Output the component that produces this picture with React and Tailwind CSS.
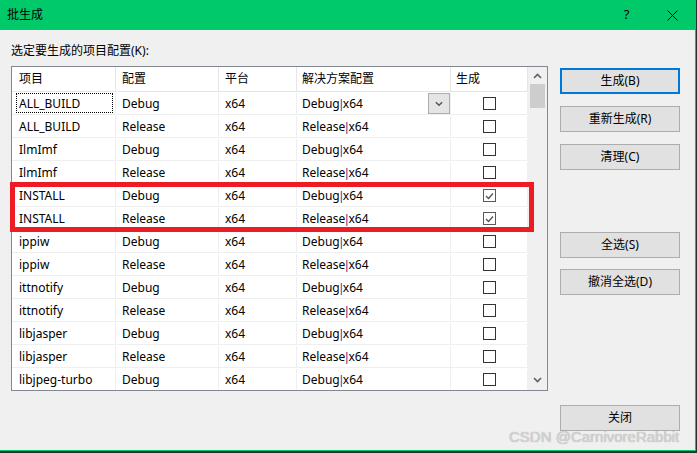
import React from 'react';

const rows = [
  { name: 'ALL_BUILD', cfg: 'Debug', checked: false },
  { name: 'ALL_BUILD', cfg: 'Release', checked: false },
  { name: 'IlmImf', cfg: 'Debug', checked: false },
  { name: 'IlmImf', cfg: 'Release', checked: false },
  { name: 'INSTALL', cfg: 'Debug', checked: true },
  { name: 'INSTALL', cfg: 'Release', checked: true },
  { name: 'ippiw', cfg: 'Debug', checked: false },
  { name: 'ippiw', cfg: 'Release', checked: false },
  { name: 'ittnotify', cfg: 'Debug', checked: false },
  { name: 'ittnotify', cfg: 'Release', checked: false },
  { name: 'libjasper', cfg: 'Debug', checked: false },
  { name: 'libjasper', cfg: 'Release', checked: false },
  { name: 'libjpeg-turbo', cfg: 'Debug', checked: false },
];

const Chevron = ({ up = false, className = '' }) => (
  <svg width="9" height="6" viewBox="0 0 9 6" className={className}>
    <path
      d={up ? 'M1 5 L4.5 1.5 L8 5' : 'M1 1 L4.5 4.5 L8 1'}
      fill="none"
      stroke="currentColor"
      strokeWidth="1.6"
    />
  </svg>
);

const Checkbox = ({ checked }) => (
  <div
    className={`w-[13px] h-[13px] bg-white border ${checked ? 'border-[#5a5a5a]' : 'border-[#333]'} flex items-center justify-center`}
  >
    {checked && (
      <svg width="9" height="8" viewBox="0 0 9 8">
        <path d="M1 4 L3.5 6.5 L8 1.5" fill="none" stroke="#555" strokeWidth="1.3" />
      </svg>
    )}
  </div>
);

const Button = ({ children, primary, className = '' }) => (
  <button
    className={`w-[120px] h-[26px] bg-[#e1e1e1] text-[12px] text-black flex items-center justify-center ${
      primary ? 'border-2 border-[#0078d7]' : 'border border-[#adadad]'
    } ${className}`}
  >
    {children}
  </button>
);

const Config = ({ cfg }) => (
  <span>
    {cfg}
    <span className="text-[#6b2a86] font-['Liberation_Sans',sans-serif]">|</span>x64
  </span>
);

const App = () => {
  return (
    <div className="relative w-[697px] h-[453px] bg-[#2e2e2e] overflow-hidden font-['Noto_Sans','Noto_Sans_CJK_SC',sans-serif] text-black">
      <div className="w-[696px] h-[451px] flex flex-col border-r border-b border-[#00c96a]">
        {/* title bar */}
        <div className="h-[30px] bg-[#00c96a] flex items-center">
          <span className="pl-[7px] text-[12px]">批生成</span>
          <div className="ml-auto flex h-full">
            <div className="w-[45px] flex items-center justify-center text-[13px]">?</div>
            <div className="w-[46px] flex items-center justify-center">
              <svg width="11" height="11" viewBox="0 0 11 11">
                <path d="M0.5 0.5 L10.5 10.5 M10.5 0.5 L0.5 10.5" stroke="#000" strokeWidth="1" />
              </svg>
            </div>
          </div>
        </div>

        {/* body */}
        <div className="flex-1 bg-[#f0f0f0] flex">
          <div className="pl-[11px] pt-[13px] flex flex-col">
            <div className="h-[16px] leading-[16px] text-[12px]">选定要生成的项目配置(K):</div>
            <div className="mt-[7px] w-[537px] h-[325px] border border-[#828790] bg-white flex overflow-hidden">
              <div className="w-[516px] flex flex-col text-[12px]">
                <div className="h-[25px] shrink-0 flex border-b border-[#e5e5e5]">
                  <div className="w-[104px] pl-[7px] border-r border-[#e5e5e5] flex items-center">项目</div>
                  <div className="w-[103px] pl-[6px] border-r border-[#e5e5e5] flex items-center">配置</div>
                  <div className="w-[78px] pl-[6px] border-r border-[#e5e5e5] flex items-center">平台</div>
                  <div className="w-[154px] pl-[5px] border-r border-[#e5e5e5] flex items-center">解决方案配置</div>
                  <div className="w-[77px] pl-[5px] border-r border-[#e5e5e5] flex items-center">生成</div>
                </div>
                {rows.map((r, i) => (
                  <div key={i} className="h-[23px] shrink-0 flex border-b border-[#efefef] pt-px">
                    <div className="relative w-[104px] pl-[7px] border-r border-[#efefef] flex items-center">
                      {i === 0 && (
                        <div className="absolute left-[4px] right-[2px] top-0 bottom-[1px] border border-dotted border-black" />
                      )}
                      {r.name}
                    </div>
                    <div className="w-[103px] pl-[6px] border-r border-[#efefef] flex items-center">{r.cfg}</div>
                    <div className="w-[78px] pl-[6px] border-r border-[#efefef] flex items-center">x64</div>
                    <div className="relative w-[154px] pl-[5px] border-r border-[#efefef] flex items-center">
                      <Config cfg={r.cfg} />
                      {i === 0 && (
                        <div className="absolute right-0 top-0 w-[22px] h-[21px] border border-[#adadad] bg-[#e5e5e5] flex items-center justify-center text-[#555]">
                          <Chevron className="w-[8px]" />
                        </div>
                      )}
                    </div>
                    <div className="w-[77px] border-r border-[#efefef] flex items-center justify-center">
                      <Checkbox checked={r.checked} />
                    </div>
                  </div>
                ))}
              </div>
              {/* scrollbar */}
              <div className="w-[19px] bg-[#f0f0f0] flex flex-col">
                <div className="h-[17px] flex items-center justify-center text-[#606060]">
                  <Chevron up />
                </div>
                <div className="ml-[2px] w-[15px] h-[24px] bg-[#cdcdcd]" />
                <div className="flex-1" />
                <div className="h-[17px] flex items-center justify-center text-[#606060] mb-[2px]">
                  <Chevron />
                </div>
              </div>
            </div>
          </div>

          <div className="ml-[12px] pt-[38px] flex flex-col">
            <Button primary>生成(B)</Button>
            <Button className="mt-[12px]">重新生成(R)</Button>
            <Button className="mt-[12px]">清理(C)</Button>
            <Button className="mt-[62px]">全选(S)</Button>
            <Button className="mt-[11px]">撤消全选(D)</Button>
            <Button className="mt-[110px]">关闭</Button>
          </div>
        </div>
      </div>

      {/* red highlight around INSTALL rows */}
      <div className="absolute left-[10px] top-[182px] w-[524px] h-[50px] border-[5px] border-[#ed1c24]" />

      {/* watermark */}
      <div className="absolute left-[509px] top-[428px] text-[15px] leading-[18px] text-[#d4d4d4] font-['Liberation_Sans',sans-serif] [text-shadow:0_0_1px_#a0a0a0]">
        CSDN @CarnivoreRabbit
      </div>
    </div>
  );
};

export default App;
